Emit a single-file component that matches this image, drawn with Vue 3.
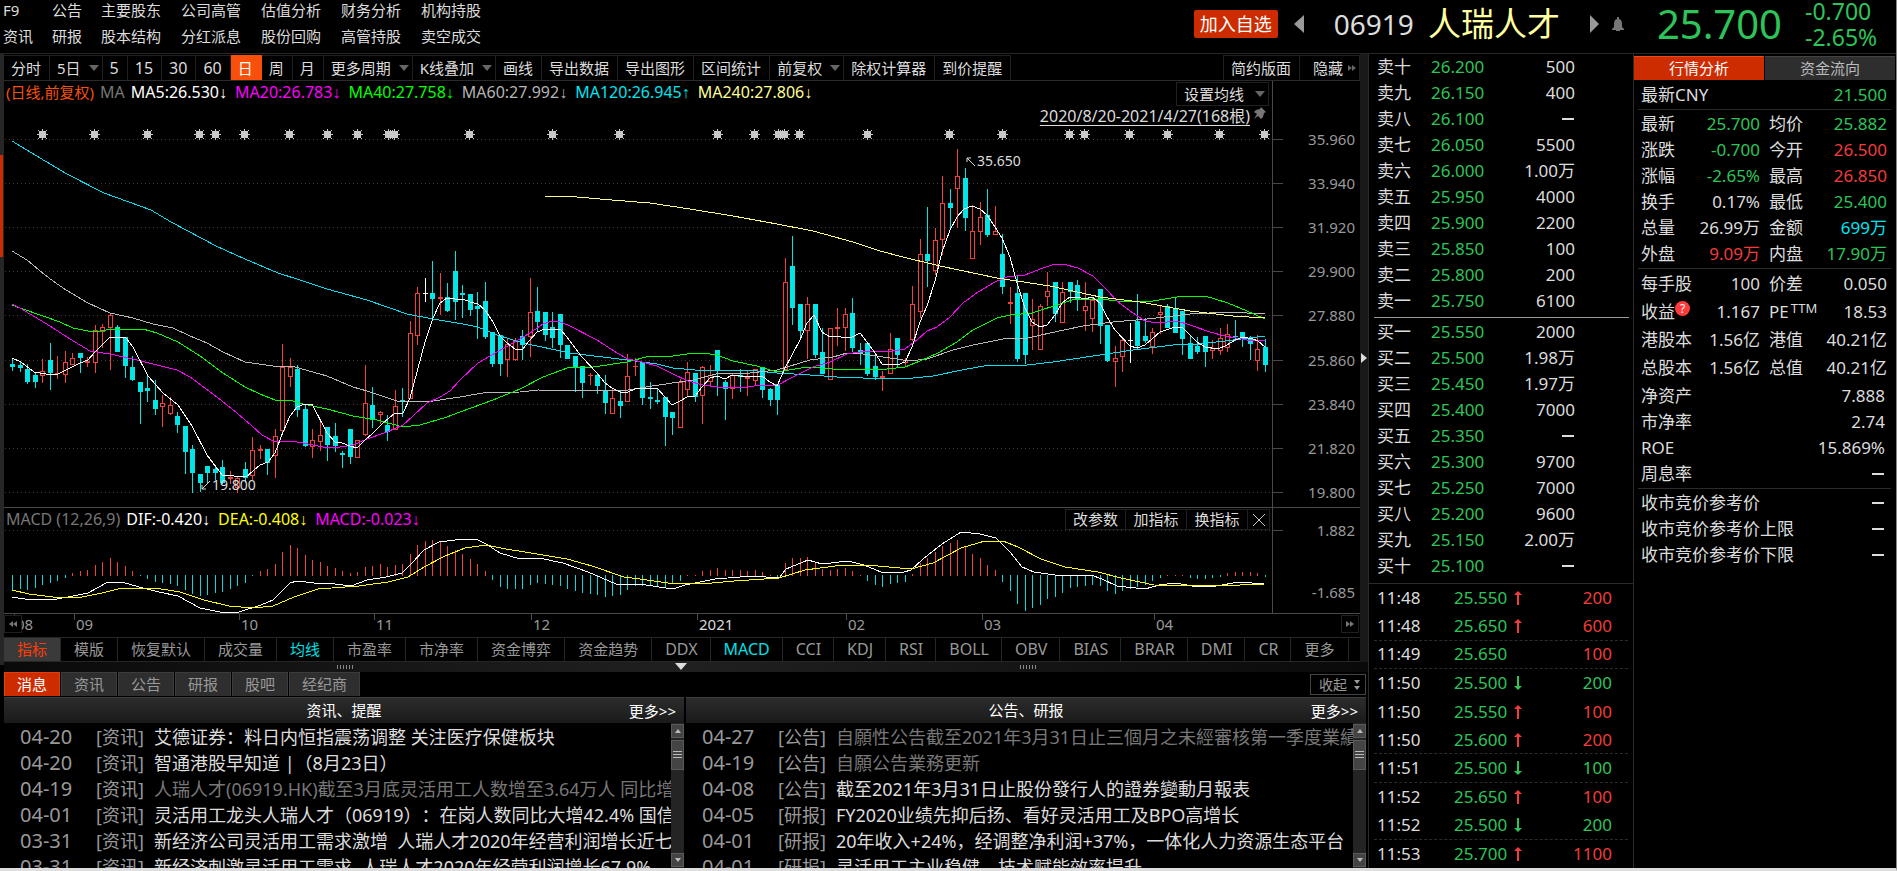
<script setup>
const navLinks = [
  ['F9', '公告', '主要股东', '公司高管', '估值分析', '财务分析', '机构持股'],
  ['资讯', '研报', '股本结构', '分红派息', '股份回购', '高管持股', '卖空成交'],
]

const tools = [
  { t: '分时' }, { t: '5日', menu: true }, { t: '5', num: true }, { t: '15', num: true }, { t: '30', num: true }, { t: '60', num: true },
  { t: '日', on: true }, { t: '周' }, { t: '月' }, { t: '更多周期', menu: true }, { t: 'K线叠加', menu: true },
  { t: '画线' }, { t: '导出数据' }, { t: '导出图形' }, { t: '区间统计' }, { t: '前复权', menu: true },
  { t: '除权计算器' }, { t: '到价提醒' },
]

const legend = [
  { t: 'MA5:26.530', a: '↓', c: 'white' },
  { t: 'MA20:26.783', a: '↓', c: 'magenta' },
  { t: 'MA40:27.758', a: '↓', c: 'lime' },
  { t: 'MA60:27.992', a: '↓', c: 'silver' },
  { t: 'MA120:26.945', a: '↑', c: 'cyan' },
  { t: 'MA240:27.806', a: '↓', c: 'yellow' },
]
const macdLegend = [
  { t: 'DIF:-0.420', a: '↓', c: 'white' },
  { t: 'DEA:-0.408', a: '↓', c: 'bright' },
  { t: 'MACD:-0.023', a: '↓', c: 'magenta' },
]

const priceAxis = [
  [139, '35.960'], [183, '33.940'], [227, '31.920'], [271, '29.900'], [315, '27.880'],
  [360, '25.860'], [404, '23.840'], [448, '21.820'], [492, '19.800'],
]
const months = [
  [14, '08'], [74, '09'], [239, '10'], [374, '11'], [531, '12'],
  [697, '2021'], [846, '02'], [982, '03'], [1154, '04'],
]
const events = [42, 94, 147, 199, 215, 244, 289, 327, 357, 388, 394, 469, 552, 619, 717, 754, 778, 784, 799, 867, 949, 1002, 1069, 1084, 1129, 1167, 1219, 1264]

// one entry per trading day: high, body top, body bottom, low, kind (c down, r up, w flat)
const raw = `359,364,367,371,c;362,365,368,372,c;364,369,382,384,c;373,375,382,388,c;359,371,376,383,r;343,360,373,390,c;356,373,374,379,r;351,362,375,383,r;353,358,365,365,r;353,353,358,373,c
357,361,363,367,r;325,330,363,373,r;324,327,332,348,r;314,315,328,370,r;325,327,352,352,c;337,337,366,378,c;356,367,380,381,c;382,382,392,424,c;375,388,391,402,c;380,400,409,415,c
395,403,407,427,r;397,405,414,415,r;412,416,425,433,c;426,426,452,474,c;445,449,473,493,c;474,474,483,492,c;466,466,473,484,c;466,469,473,480,c;460,467,483,484,c;471,477,479,484,r
477,478,488,493,r;462,469,478,483,c;437,450,476,480,r;445,449,451,459,r;449,449,463,475,c;429,436,456,478,r;344,367,431,433,r;358,367,377,387,r;365,369,410,417,c;405,409,446,447,c
429,440,447,458,r;421,435,442,451,r;427,427,445,461,c;423,436,446,452,c;451,453,455,468,c;429,429,457,464,c;440,440,458,458,r;365,403,435,436,r;387,405,420,428,c;411,412,415,424,r
415,425,432,441,c;390,406,430,430,r;388,400,402,417,c;321,333,399,399,r;287,293,336,345,r;278,293,294,302,w;261,293,299,319,c;273,297,299,315,r;283,297,311,312,c;251,271,302,320,c
285,293,295,318,c;294,294,310,316,c;292,306,309,339,c;282,301,337,339,c;332,332,364,367,c;335,335,364,376,c;338,344,360,377,r;338,341,360,361,r;330,336,345,360,c;278,312,337,357,r
287,311,322,332,c;312,312,335,341,c;312,327,338,348,c;314,314,345,358,c;345,345,359,359,c;356,356,368,392,c;366,366,383,398,c;373,375,376,385,r;373,375,386,394,c;375,390,403,414,c
389,398,414,414,r;390,401,406,418,c;354,376,402,402,r;358,366,367,376,r;362,362,398,405,c;382,397,399,409,c;388,400,402,404,c;397,397,417,446,c;412,412,418,435,c;379,382,428,428,r
362,372,390,396,r;373,373,397,402,c;366,367,396,424,r;365,375,382,386,r;350,350,370,396,c;380,382,389,420,c;374,375,389,399,r;369,375,377,392,c;371,377,379,396,r;369,369,381,385,r
367,367,390,398,c;388,389,400,406,c;384,384,400,415,c;258,282,370,370,r;236,266,308,325,c;304,304,331,340,c;297,304,331,359,r;304,304,355,358,c;328,352,374,374,c;328,328,380,380,r
308,327,329,346,r;308,314,328,351,r;298,313,348,352,c;343,350,353,365,c;343,343,374,376,c;356,366,377,380,c;371,376,378,391,r;333,349,374,374,r;338,338,355,367,c;358,360,363,367,r
286,304,340,341,r;239,254,312,318,r;207,254,261,287,c;228,240,271,275,r;176,203,240,255,r;189,203,208,230,c;149,176,189,228,r;168,178,218,231,c;205,231,259,259,r;202,217,232,245,r
189,215,235,237,c;206,231,235,235,r;234,254,287,294,c;287,302,304,324,r;275,293,359,362,c;293,293,355,364,c;299,319,326,350,r;304,306,350,350,r;272,291,297,306,r;282,282,314,322,c
282,292,323,323,r;282,282,292,303,c;280,285,299,311,c;282,306,311,331,r;297,300,319,332,r;289,289,326,344,c;325,325,361,362,c;346,358,362,387,r;337,340,357,372,r;323,340,341,363,w
294,321,346,349,c;318,336,341,343,c;328,332,347,354,r;306,312,315,334,r;304,306,328,328,c;298,308,333,333,c;311,311,339,355,c;335,343,359,359,c;337,346,352,354,c;336,336,352,367,c
340,348,351,359,r;328,338,351,355,r;324,334,348,352,r;320,336,337,341,c;332,332,337,347,c;336,339,344,360,c;335,349,361,371,r;339,347,365,372,c`
const dayX = (i) => Math.floor(12.5 + 7.5 * i)
const candles = raw.split(/[;\n]/).map((s, i) => {
  const [hi, top, bot, lo, kind] = s.split(',')
  return { x: dayX(i), hi: +hi, top: +top, h: Math.max(1, bot - top), len: Math.max(1, lo - hi), kind }
})

const averages = [
  { c: 'l-cyan', p: '12,141 45,161 67,174 104,193 151,210 171,222 216,246 245,259 278,273 300,280 327,289 367,300 407,314 433,319 463,324 478,327 497,335 523,343 570,353 627,360 657,364 673,368 695,370 747,370 777,373 810,375 837,377 863,378 913,378 933,376 967,369 990,365 1027,365 1053,362 1093,356 1133,350 1173,345 1200,344 1233,340 1265,336' },
  { c: 'l-silver', p: '12,251 27,260 45,275 53,281 66,290 88,303 110,313 133,318 153,324 173,328 190,336 207,343 223,352 245,362 273,366 295,367 327,376 353,387 367,391 397,401 410,402 433,401 460,397 483,393 520,392 538,390 617,391 628,390 652,386 693,380 720,373 750,373 777,370 810,360 833,357 847,353 863,354 890,358 910,361 927,359 953,350 973,345 1003,339 1028,338 1050,333 1083,326 1113,322 1147,319 1190,314 1228,312 1265,314' },
  { c: 'l-lime', p: '12,305 23,309 60,322 73,328 93,332 113,329 143,329 157,333 178,342 200,356 223,373 245,387 260,394 275,400 290,400 303,404 327,409 353,416 377,420 403,427 420,425 447,417 460,412 493,400 520,389 543,377 570,367 593,367 627,362 650,356 673,356 687,354 703,353 717,355 733,361 757,366 777,372 807,367 833,369 887,369 905,367 920,361 938,353 957,342 973,330 997,318 1010,315 1032,313 1060,304 1075,299 1100,299 1117,301 1153,301 1177,297 1205,296 1228,303 1247,311 1265,319' },
  { c: 'l-magenta', p: '12,304 20,308 50,326 70,339 90,351 110,354 133,359 153,364 177,370 190,377 217,397 237,413 252,426 262,435 275,442 290,441 303,443 323,447 340,447 353,445 367,439 387,432 403,425 413,416 427,403 440,397 450,391 460,380 478,363 497,352 513,343 530,333 543,324 552,321 560,322 568,325 597,340 617,353 628,359 642,362 657,366 673,374 688,381 703,385 718,387 747,387 762,385 778,385 793,377 813,367 830,362 847,354 860,352 893,351 905,349 917,340 927,331 937,327 950,317 963,303 978,292 995,282 1007,277 1025,275 1043,268 1055,264 1063,264 1078,268 1093,276 1107,290 1117,301 1133,313 1145,321 1157,323 1177,321 1190,325 1210,332 1225,336 1247,340 1265,341' },
  { c: 'l-yellow', p: '544,196 577,197 612,200 650,203 690,209 733,216 777,224 813,231 853,242 880,251 903,257 940,266 997,278 1050,286 1100,297 1140,302 1190,311 1233,316 1265,318' },
  { c: 'l-white', p: '12,358 21,362 34,372 46,374 58,374 70,368 80,363 88,360 95,352 110,337 118,337 126,338 133,347 148,376 163,393 178,405 192,426 207,455 222,475 246,477 260,465 268,462 275,453 283,432 290,416 297,407 305,404 312,404 327,433 335,442 342,443 350,446 357,448 365,440 372,434 383,423 395,413 403,413 410,398 417,372 425,342 433,318 440,303 447,298 455,299 463,299 470,302 478,304 485,310 493,322 500,336 507,343 515,349 522,350 529,341 537,332 545,329 560,329 567,337 582,357 597,373 605,383 612,388 620,392 628,392 635,389 642,388 657,388 665,397 672,405 680,401 687,397 695,396 702,387 710,378 717,376 725,379 732,375 740,376 762,376 770,382 777,386 785,368 792,355 800,340 807,323 814,315 822,332 830,337 837,336 845,338 852,337 860,333 867,342 875,353 882,364 897,365 905,362 912,347 920,322 927,306 935,281 942,252 950,230 957,217 964,209 972,206 980,209 987,215 995,227 1002,238 1010,257 1017,283 1025,308 1032,322 1040,327 1047,325 1055,315 1062,303 1070,297 1077,297 1085,299 1092,297 1100,303 1107,317 1115,330 1130,346 1137,348 1145,345 1152,339 1160,332 1175,327 1183,328 1190,335 1197,342 1205,347 1218,349 1227,345 1235,340 1243,337 1253,339 1258,341 1265,347' },
]

const zero = 576
const histogram = [
  -15, -14, -15, -13, -10, -8, -6, -3, 3, 5, 6, 11, 14, 18, 14, 10, 5, -1, -4, -7, -8, -9, -11, -15, -19, -21, -20, -18, -17, -14, -11, -8, -1,
  5, 7, 12, 24, 31, 28, 21, 16, 14, 10, 8, 5, 3, 4, 9, 10, 12, 9, 11, 12, 22, 31, 35, 36, 34, 30, 26, 22, 17, 12, 5,
  -5, -12, -14, -14, -14, -10, -8, -9, -10, -11, -14, -16, -18, -19, -20, -22, -21, -20, -15, -11, -11, -11, -11, -12, -9, -6,
  1, 1, 5, 6, 8, 6, 6, 6, 5, 6, 4, 1, -2, 13, 18, 18, 19, 13, 7, 6, 7, 8, 5, 1, -6, -10, -12, -9, -8, -7,
  2, 13, 18, 24, 30, 33, 36, 29, 22, 18, 11, 6, -7, -16, -29, -36, -33, -30, -24, -22, -18, -13, -12, -11, -10, -11,
  -16, -19, -16, -14, -12, -10, -6, -3, 1, 1, 1, -3, -4, -4, -3, -2, 3, 4, 4, 4, 3, -2,
].map((v, i) => ({ x: dayX(i), y: v > 0 ? zero - v : zero - 1, h: Math.abs(v), up: v > 0 }))
const dif = '12,597 31,600 57,599 73,596 88,593 108,582 122,582 139,587 159,592 178,596 200,608 220,612 239,612 261,605 273,600 290,583 297,581 314,583 335,584 351,586 367,580 386,577 402,573 412,563 424,550 439,542 463,539 478,540 486,544 500,553 520,559 539,558 563,563 588,572 616,584 640,584 659,587 673,589 685,585 715,579 753,576 779,578 786,569 808,560 822,564 848,561 864,565 881,572 904,572 911,570 923,559 942,544 961,532 980,534 996,538 1010,552 1022,567 1034,572 1055,575 1091,575 1102,579 1117,586 1145,589 1159,585 1176,583 1192,586 1216,586 1239,582 1264,584'
const dea = '12,590 29,594 53,597 82,597 102,593 122,588 155,588 180,592 204,600 229,606 253,608 273,606 294,597 318,589 359,586 388,582 408,577 424,567 445,556 465,548 486,545 506,549 531,553 567,559 592,566 624,577 640,579 668,583 701,584 734,581 779,578 805,570 843,565 867,565 911,569 933,563 961,548 985,541 1003,541 1018,547 1041,559 1065,567 1098,572 1121,578 1154,585 1216,586 1264,584'

const indicators = ['指标', '模版', '恢复默认', '成交量', '均线', '市盈率', '市净率', '资金博弈', '资金趋势', 'DDX', 'MACD', 'CCI', 'KDJ', 'RSI', 'BOLL', 'OBV', 'BIAS', 'BRAR', 'DMI', 'CR', '更多']
const isLatin = (s) => /^[A-Z]+$/.test(s)
const newsTabs = ['消息', '资讯', '公告', '研报', '股吧', '经纪商']
const feeds = [
  {
    title: '资讯、提醒',
    rows: [
      ['04-20', '资讯', '艾德证券：料日内恒指震荡调整 关注医疗保健板块'],
      ['04-20', '资讯', '智通港股早知道 |（8月23日）'],
      ['04-19', '资讯', '人瑞人才(06919.HK)截至3月底灵活用工人数增至3.64万人 同比增长', true],
      ['04-01', '资讯', '灵活用工龙头人瑞人才（06919）：在岗人数同比大增42.4% 国信'],
      ['03-31', '资讯', '新经济公司灵活用工需求激增  人瑞人才2020年经营利润增长近七成'],
      ['03-31', '资讯', '新经济刺激灵活用工需求  人瑞人才2020年经营利润增长67.9%'],
    ],
  },
  {
    title: '公告、研报',
    rows: [
      ['04-27', '公告', '自願性公告截至2021年3月31日止三個月之未經審核第一季度業績', true],
      ['04-19', '公告', '自願公告業務更新', true],
      ['04-08', '公告', '截至2021年3月31日止股份發行人的證券變動月報表'],
      ['04-05', '研报', 'FY2020业绩先抑后扬、看好灵活用工及BPO高增长'],
      ['04-01', '研报', '20年收入+24%，经调整净利润+37%，一体化人力资源生态平台'],
      ['04-01', '研报', '灵活用工主业稳健，技术赋能效率提升'],
    ],
  },
]

const asks = [
  ['卖十', '26.200', '500'], ['卖九', '26.150', '400'], ['卖八', '26.100', '—'], ['卖七', '26.050', '5500'], ['卖六', '26.000', '1.00万'],
  ['卖五', '25.950', '4000'], ['卖四', '25.900', '2200'], ['卖三', '25.850', '100'], ['卖二', '25.800', '200'], ['卖一', '25.750', '6100'],
]
const bids = [
  ['买一', '25.550', '2000'], ['买二', '25.500', '1.98万'], ['买三', '25.450', '1.97万'], ['买四', '25.400', '7000'], ['买五', '25.350', '—'],
  ['买六', '25.300', '9700'], ['买七', '25.250', '7000'], ['买八', '25.200', '9600'], ['买九', '25.150', '2.00万'], ['买十', '25.100', '—'],
]
const trades = [
  ['11:48', '25.550', '↑', '200', 'red'], ['11:48', '25.650', '↑', '600', 'red', true], ['11:49', '25.650', '', '100', 'red', true],
  ['11:50', '25.500', '↓', '200', 'green'], ['11:50', '25.550', '↑', '100', 'red'], ['11:50', '25.600', '↑', '200', 'red', true],
  ['11:51', '25.500', '↓', '100', 'green', true], ['11:52', '25.650', '↑', '100', 'red'], ['11:52', '25.500', '↓', '200', 'green', true],
  ['11:53', '25.700', '↑', '1100', 'red'],
]

const quoteA = [
  ['最新', '25.700', 'green', '均价', '25.882', 'green'],
  ['涨跌', '-0.700', 'green', '今开', '26.500', 'red'],
  ['涨幅', '-2.65%', 'green', '最高', '26.850', 'red'],
  ['换手', '0.17%', '', '最低', '25.400', 'green'],
  ['总量', '26.99万', '', '金额', '699万', 'cyan'],
  ['外盘', '9.09万', 'red', '内盘', '17.90万', 'green'],
]
const quoteB = [
  ['每手股', '100', '价差', '0.050'],
  ['收益', '1.167', 'PE', '18.53'],
  ['港股本', '1.56亿', '港值', '40.21亿'],
  ['总股本', '1.56亿', '总值', '40.21亿'],
]
const quoteC = [['净资产', '7.888'], ['市净率', '2.74'], ['ROE', '15.869%'], ['周息率', '—']]
const quoteD = [['收市竞价参考价', '—'], ['收市竞价参考价上限', '—'], ['收市竞价参考价下限', '—']]
</script>

<template>
  <div class="app">
    <header class="head">
      <nav class="links">
        <template v-for="(row, r) in navLinks" :key="r">
          <a v-for="l in row" :key="l" href="#">{{ l }}</a>
        </template>
      </nav>
      <div class="stock">
        <button class="add">加入自选</button>
        <button class="step prev" aria-label="上一只"><svg width="10" height="18"><path d="M10 0V18L0 9Z" /></svg></button>
        <span class="code">06919</span>
        <h1>人瑞人才</h1>
        <button class="step next" aria-label="下一只"><svg width="9" height="18"><path d="M0 0V18L9 9Z" /></svg></button>
        <button class="step bell" aria-label="提醒">
          <svg width="12" height="14"><path d="M5 0h2v2l2 1 1 3v4l2 2v1H0v-1l2-2V6l1-3 2-1ZM4 13h4v1H4Z" /></svg>
        </button>
        <strong class="price">25.700</strong>
        <div class="change"><span>-0.700</span><span>-2.65%</span></div>
      </div>
    </header>

    <div class="body">
      <div class="rail"><i></i></div>
      <main class="main">
        <div class="upper">
          <div class="charts">
            <div class="tools">
              <button v-for="b in tools" :key="b.t" :class="{ on: b.on, menu: b.menu, num: b.num }">{{ b.t }}<i v-if="b.menu" class="tri"></i></button>
              <span class="fill"></span>
              <button class="first">简约版面</button>
              <button class="hide">隐藏<svg width="8" height="8"><path d="M0 1V7L4 4ZM4 1V7L8 4Z" /></svg></button>
            </div>
            <div class="plot">
              <svg class="canvas" viewBox="4 81 1356 555" preserveAspectRatio="xMinYMin meet" role="img" aria-label="日K线">
                <g class="crisp">
                  <path v-for="a in priceAxis" :key="a[0]" class="dots" :d="`M5 ${a[0]}.5H1272`" />
                  <path class="dots" d="M5 530.5H1272" />
                  <path class="axis" d="M1272.5 81V613M4 507.5H1360M4 613.5H1360" />
                  <path v-for="a in priceAxis" :key="a[1]" class="axis" :d="`M1273 ${a[0]}.5H1283`" />
                  <path class="axis" d="M1273 530.5H1283" />
                  <path v-for="m in months" :key="m[0]" class="axis" :d="`M${m[0]}.5 614V620`" />
                  <g v-for="(x, i) in events" :key="i" class="event">
                    <path :d="`M${x - 3} 131h7v7h-7ZM${x} 129h1v11h-1ZM${x - 5} 134h11v1h-11ZM${x - 4} 130h1v1h-1ZM${x + 4} 130h1v1h-1ZM${x - 4} 138h1v1h-1ZM${x + 4} 138h1v1h-1Z`" />
                  </g>
                  <g v-for="k in candles" :key="k.x" :class="'k-' + k.kind">
                    <rect :x="k.x" :y="k.hi" width="1" :height="k.len" />
                    <rect v-if="k.kind === 'r' && k.h > 2" class="hollow" :x="k.x - 1.5" :y="k.top + 0.5" width="4" :height="k.h - 1" />
                    <rect v-else :x="k.x - 2" :y="k.top" width="5" :height="k.h" />
                  </g>
                  <polyline v-for="l in averages" :key="l.c" class="line" :class="l.c" :points="l.p" />
                  <rect v-for="b in histogram" :key="b.x" :class="b.up ? 'bar-up' : 'bar-down'" :x="b.x" :y="b.y" width="1" :height="b.h" />
                  <polyline class="line l-white" :points="dif" />
                  <polyline class="line l-bright" :points="dea" />
                </g>
                <path class="mark" d="M975 166L967 158M967 162V158H971M210 481L202 489M202 485V489H206" />
                <text class="tag" x="977" y="166">35.650</text>
                <text class="tag" x="212" y="490">19.800</text>
                <text v-for="a in priceAxis" :key="a[1]" class="scale" x="1355" :y="a[0] + 6">{{ a[1] }}</text>
                <text class="scale" x="1355" y="536">1.882</text>
                <text class="scale" x="1355" y="598">-1.685</text>
                <text v-for="m in months" :key="m[1]" class="month" :class="{ year: m[1] === '2021' }" :x="m[0] + 2" y="630">{{ m[1] }}</text>
                <path class="pin" d="M1261 107l5 5-2 1-1 4-2 2-3-3-4 3 3-5-3-2 2-2 4-1Z" />
              </svg>
              <div class="legend">
                <span class="mode">(日线,前复权)</span><span class="dim">MA</span>
                <span v-for="l in legend" :key="l.t" class="item" :class="l.c">{{ l.t }}<i class="arrow">{{ l.a }}</i></span>
              </div>
              <button class="setma">设置均线<i class="tri"></i></button>
              <a class="range" href="#">2020/8/20-2021/4/27(168根)</a>
              <div class="legend sub">
                <span class="dim">MACD (12,26,9)</span>
                <span v-for="l in macdLegend" :key="l.t" class="item" :class="l.c">{{ l.t }}<i class="arrow">{{ l.a }}</i></span>
              </div>
              <div class="subtools">
                <button>改参数</button><button>加指标</button><button>换指标</button>
                <button class="close" aria-label="关闭"><svg width="12" height="12"><path d="M0 0L12 12M12 0L0 12" /></svg></button>
              </div>
              <button class="scroll back" aria-label="向左"><svg width="8" height="6"><path d="M4 0V6L0 3ZM8 0V6L4 3Z" /></svg></button>
              <button class="scroll fwd" aria-label="向右"><svg width="8" height="6"><path d="M0 0V6L4 3ZM4 0V6L8 3Z" /></svg></button>
            </div>
            <div class="indicators">
              <button v-for="n in indicators" :key="n" :class="{ latin: isLatin(n), sel: n === '指标', hot: n === '均线' || n === 'MACD' }">{{ n }}</button>
            </div>
          </div>
          <div class="vsplit"><svg width="6" height="10"><path d="M0 0V10L6 5Z" /></svg></div>
        </div>
        <div class="hsplit"><i class="grip"></i><svg width="12" height="8"><path d="M0 0H12L6 7Z" /></svg><i class="grip"></i></div>
        <div class="newstabs">
          <button v-for="(n, i) in newsTabs" :key="n" :class="{ on: i === 0 }">{{ n }}</button>
          <span class="fill"></span>
          <button class="fold">收起<svg width="8" height="10"><path d="M1 0H7L4 4ZM1 6H7L4 10Z" /></svg></button>
        </div>
        <div class="feeds">
          <section v-for="f in feeds" :key="f.title" class="feed">
            <div class="feedhead"><h2>{{ f.title }}</h2><a href="#">更多&gt;&gt;</a></div>
            <div class="feedbody">
              <ul>
                <li v-for="(n, i) in f.rows" :key="i">
                  <time>{{ n[0] }}</time><span class="kind">[{{ n[1] }}]</span><a href="#" :class="{ read: n[3] }">{{ n[2] }}</a>
                </li>
              </ul>
              <div class="bar">
                <i class="sb"><svg width="6" height="4"><path d="M0 4H6L3 0Z" /></svg></i>
                <i class="thumb"><svg width="9" height="9"><path d="M0 .5H9M0 3.5H9M0 6.5H9" /></svg></i>
                <i class="sb last"><svg width="6" height="4"><path d="M0 0H6L3 4Z" /></svg></i>
              </div>
            </div>
          </section>
        </div>
      </main>

      <section class="book">
        <table class="depth">
          <tbody>
            <tr v-for="a in asks" :key="a[0]"><th scope="row">{{ a[0] }}</th><td class="green">{{ a[1] }}</td><td class="qty"><i v-if="a[2] === '—'" class="dash"></i><template v-else>{{ a[2] }}</template></td></tr>
          </tbody>
        </table>
        <hr class="mid">
        <table class="depth">
          <tbody>
            <tr v-for="b in bids" :key="b[0]"><th scope="row">{{ b[0] }}</th><td class="green">{{ b[1] }}</td><td class="qty"><i v-if="b[2] === '—'" class="dash"></i><template v-else>{{ b[2] }}</template></td></tr>
          </tbody>
        </table>
        <ol class="trades">
          <li v-for="(t, i) in trades" :key="i" :class="{ cut: t[5] }">
            <time>{{ t[0] }}</time><span class="green">{{ t[1] }}</span>
            <svg width="8" height="14" :class="t[4]"><path v-if="t[2] === '↑'" d="M3 4H0L4 0 8 4H5V14H3Z" /><path v-else-if="t[2] === '↓'" d="M3 0H5V10H8L4 14 0 10H3Z" /></svg>
            <b :class="t[4]">{{ t[3] }}</b>
          </li>
        </ol>
      </section>

      <aside class="quote">
        <div class="qtabs"><button class="on">行情分析</button><button>资金流向</button></div>
        <table class="wide top"><tbody><tr><th scope="row">最新CNY</th><td class="green">21.500</td></tr></tbody></table>
        <hr>
        <table class="pair">
          <tbody>
            <tr v-for="q in quoteA" :key="q[0]"><th scope="row">{{ q[0] }}</th><td :class="q[2]">{{ q[1] }}</td><th scope="row">{{ q[3] }}</th><td :class="q[5]">{{ q[4] }}</td></tr>
          </tbody>
        </table>
        <hr>
        <table class="pair tall">
          <tbody>
            <tr v-for="q in quoteB" :key="q[0]">
              <th scope="row">{{ q[0] }}<i v-if="q[0] === '收益'" class="help">?</i></th><td>{{ q[1] }}</td>
              <th scope="row">{{ q[2] }}<sup v-if="q[2] === 'PE'">TTM</sup></th><td>{{ q[3] }}</td>
            </tr>
          </tbody>
        </table>
        <table class="wide ratios">
          <tbody><tr v-for="q in quoteC" :key="q[0]"><th scope="row">{{ q[0] }}</th><td><i v-if="q[1] === '—'" class="dash"></i><template v-else>{{ q[1] }}</template></td></tr></tbody>
        </table>
        <hr>
        <table class="wide">
          <tbody><tr v-for="q in quoteD" :key="q[0]"><th scope="row">{{ q[0] }}</th><td><i class="dash"></i></td></tr></tbody>
        </table>
      </aside>
    </div>
  </div>
</template>

<style>
body { margin: 0; background: #000; }
</style>

<style scoped>
* { box-sizing: border-box; }
.app {
  height: 100vh; display: flex; flex-direction: column; overflow: hidden;
  background: #000; color: #dcdcdc; border-bottom: 3px solid #dedede; border-right: 1px solid #888;
  font-family: "Noto Sans", "Noto Sans CJK SC", sans-serif; font-size: 15px;
}
button { font: inherit; color: inherit; background: none; border: 0; padding: 0; white-space: nowrap; }
a { color: inherit; text-decoration: none; }
i { font-style: normal; }
ul, ol { list-style: none; margin: 0; padding: 0; }
svg { display: block; fill: currentColor; }
hr { border: 0; height: 1px; background: #2a2a2a; margin: 0; }
table { border-collapse: collapse; table-layout: fixed; }
th, td { padding: 0; font-weight: normal; text-align: left; white-space: nowrap; }
.fill { flex: 1; }
.green { color: #2dc45a; }
.red { color: #f03c3c; }
.cyan { color: #00e5f0; }
.white { color: #fff; }
.magenta { color: #f0f; }
.lime { color: #0f0; }
.silver { color: #b4b4b4; }
.yellow { color: #ffff96; }
.bright { color: #ff0; }
.tri { display: block; border: 5px solid transparent; border-top: 6px solid #666; border-bottom: 0; }

.head { flex: none; height: 54px; display: flex; justify-content: space-between; border-bottom: 1px solid #262626; }
.links { display: grid; grid-template-columns: 49px 49px repeat(5, 80px); grid-auto-rows: 26px; padding-left: 3px; line-height: 20px; }
.stock { display: flex; align-items: center; height: 48px; }
.add { height: 28px; padding: 0 6px; border-radius: 2px; background: #cc2c00; color: #fff; font-size: 18px; line-height: 28px; }
.step { color: #999; }
.prev { margin: 0 30px 0 16px; }
.next { margin: 0 13px 0 30px; }
.bell { margin-right: 33px; color: #777; }
.code { font-size: 28px; margin-right: 14px; }
h1 { margin: 0; font-size: 33px; font-weight: normal; color: #ffffa0; line-height: 48px; }
.price { font-size: 40px; font-weight: normal; color: #2dc45a; margin-right: 23px; line-height: 48px; }
.change { width: 91px; display: flex; flex-direction: column; font-size: 23px; line-height: 26px; color: #2dc45a; }

.body { flex: 1; min-height: 0; display: grid; grid-template-columns: 4px minmax(0, 1fr) 265px 263px; }
.rail { height: 611px; background: #262626; padding-top: 101px; }
.rail i { display: block; height: 102px; width: 3px; background: #cc2c00; }
.main { display: flex; flex-direction: column; min-height: 0; min-width: 0; }
.upper { display: flex; flex: none; }
.charts { flex: 1; min-width: 0; }
.vsplit { width: 8px; background: #191919; color: #ddd; display: flex; align-items: center; padding-left: 1px; }

.tools { height: 27px; padding-top: 1px; display: flex; border-bottom: 1px solid #2a2a2a; }
.tools button { border: 1px solid #202020; border-width: 1px 1px 0 0; padding: 0 8px 0 7px; line-height: 24px; }
.tools button.menu { display: flex; align-items: center; gap: 8px; padding-right: 3px; }
.tools button.num { font-size: 16px; }
.tools button.on { background: #f8500a; border-color: #f8500a; color: #fff; }
.tools button.first { border-left-width: 1px; }
.tools button.hide { display: flex; align-items: center; gap: 5px; padding: 0 3px 0 13px; }
.hide svg { color: #666; }

.plot { position: relative; }
.canvas { width: 100%; height: 556px; }
.crisp { shape-rendering: crispEdges; }
.dots { stroke: #3c3c3c; stroke-dasharray: 1 3; fill: none; }
.axis { stroke: #4a4a4a; fill: none; }
.event { fill: #c8c8c8; }
.k-c { fill: #00e6e6; }
.k-r { fill: #f04040; }
.k-w { fill: #fff; }
.hollow { fill: #000; stroke: #f04040; }
.line { fill: none; stroke-width: 1; }
.l-cyan { stroke: #00e0f0; }
.l-silver { stroke: #b9b9b9; }
.l-lime { stroke: #0f0; }
.l-magenta { stroke: #f0f; }
.l-yellow { stroke: #ffff80; }
.l-white { stroke: #fff; }
.l-bright { stroke: #ff0; }
.bar-up { fill: #f04040; }
.bar-down { fill: #00dcdc; }
.mark { fill: none; stroke: #ddd; }
.tag { font-size: 14px; fill: #dcdcdc; }
.scale { font-size: 15px; fill: #999; text-anchor: end; }
.month { font-size: 15px; fill: #999; }
.month.year { fill: #dcdcdc; }
.pin { fill: #777; }
.legend { position: absolute; left: 2px; top: 0; display: flex; font-size: 16px; line-height: 22px; white-space: nowrap; }
.legend.sub { top: 427px; }
.mode { color: #f8500a; font-size: 15px; margin-right: 6px; }
.dim { color: #777; margin-right: 6px; }
.item { margin-right: 8px; }
.arrow { font-family: "Liberation Sans", sans-serif; }
.setma { position: absolute; top: 1px; right: 91px; height: 24px; padding: 0 3px 0 7px; border: 1px solid #202020; display: flex; align-items: center; gap: 11px; line-height: 22px; }
.range { position: absolute; top: 25px; right: 110px; font-size: 16px; line-height: 20px; text-decoration: underline; text-underline-offset: 3px; }
.subtools { position: absolute; top: 428px; right: 90px; display: flex; }
.subtools button { height: 21px; width: 61px; border: 1px solid #202020; border-left-width: 0; line-height: 19px; background: #000; }
.subtools button:first-child { border-left-width: 1px; }
.subtools .close { width: 22px; display: flex; align-items: center; justify-content: center; }
.close path { stroke: #ccc; }
.scroll { position: absolute; top: 534px; width: 18px; height: 18px; border: 1px solid #202020; background: #000; color: #777; display: flex; align-items: center; justify-content: center; }
.back { left: 0; }
.fwd { right: 1px; }
.indicators { height: 25px; display: flex; border: 1px solid #262626; border-width: 1px 0; font-size: 15px; color: #999; overflow: hidden; }
.indicators button { padding: 0 13px; border-right: 1px solid #262626; line-height: 23px; }
.indicators .latin { font-size: 16px; padding-right: 12px; }
.indicators .sel { background: #3a3a3a; color: #ff3c0a; }
.indicators .hot { color: #00e0e6; }

.hsplit { flex: none; height: 10px; display: grid; grid-template-columns: 1fr auto 1fr; align-items: center; padding: 0 11px 0 0; background: linear-gradient(90deg, #0a0a0a, #202020 50%, #0a0a0a); color: #ddd; }
.grip { width: 17px; height: 4px; margin-left: 333px; background: repeating-linear-gradient(90deg, #888 0 1px, transparent 1px 3px); }
.newstabs { flex: none; height: 25px; display: flex; gap: 1px; padding-right: 2px; color: #999; }
.newstabs button { height: 24px; padding: 0 12px; background: #2e2e2e; border: 1px solid #3c3c3c; border-bottom: 0; line-height: 23px; }
.newstabs button.on { background: #cc2c00; border-color: #e04010; color: #fff; }
.newstabs button.fold { display: flex; align-items: center; gap: 6px; height: 21px; margin-top: 2px; padding: 0 4px 0 8px; background: #000; border: 1px solid #444; font-size: 14px; line-height: 19px; }
.feeds { flex: 1; min-height: 0; display: grid; grid-template-columns: repeat(2, minmax(0, 1fr)); gap: 2px; padding-right: 2px; }
.feed { display: flex; flex-direction: column; min-height: 0; }
.feedhead { flex: none; height: 26px; display: grid; grid-template-columns: 1fr auto 1fr; align-items: center; border-top: 1px solid #3c3c3c; background: linear-gradient(#2c2c2c, #1a1a1a); color: #fff; }
h2 { grid-column: 2; margin: 0; font-size: 15px; font-weight: normal; line-height: 25px; }
.feedhead a { justify-self: end; margin-right: 8px; }
.feedbody { flex: 1; min-height: 0; display: flex; overflow: hidden; }
.feedbody ul { flex: 1; min-width: 0; padding-top: 1px; overflow: hidden; }
.feedbody li { display: grid; grid-template-columns: 76px 58px minmax(0, 1fr); align-items: center; height: 26px; padding-left: 16px; font-size: 18px; line-height: 26px; white-space: pre; text-spacing-trim: space-all; }
.feedbody time { font-size: 20px; color: #999; }
.kind { color: #999; }
.feedbody li a { overflow: hidden; }
.feedbody .read { color: #777; }
.bar { width: 13px; display: flex; flex-direction: column; background: #242424; padding: 1px 0; color: #bbb; }
.bar i { display: flex; align-items: center; justify-content: center; background: #444; border: 1px solid #5a5a5a; }
.sb { height: 14px; flex: none; }
.thumb { height: 30px; margin-top: 2px; flex: none; }
.thumb path { stroke: #bbb; }
.last { margin-top: auto; }

.book { border-left: 1px solid #2a2a2a; display: flex; flex-direction: column; min-height: 0; font-size: 17px; }
.depth { width: 100%; }
.depth tr { height: 26px; line-height: 26px; }
.depth th { width: 62px; padding-left: 8px; }
.depth td.green { width: 64px; }
.depth .qty { text-align: right; padding-right: 58px; }
.dash { display: inline-block; width: 12px; height: 2px; margin-right: 1px; background: #dcdcdc; vertical-align: 5px; }
.mid { flex: none; margin: 3px 4px 1px 5px; background: #999; }
.trades { flex: 1; min-height: 0; display: grid; grid-auto-rows: 1fr; margin-top: 4px; border-top: 1px solid #2a2a2a; }
.trades li { display: grid; grid-template-columns: 77px 60px 8px 1fr; align-items: center; margin: 0 5px; padding: 0 16px 0 3px; line-height: 24px; }
.trades .cut { border-bottom: 1px dashed #2c2c2c; }
.trades b { font-weight: normal; text-align: right; }

.quote { border-left: 1px solid #2a2a2a; padding-top: 1px; font-size: 17px; }
.qtabs { display: grid; grid-template-columns: 1fr 1fr; gap: 1px; padding: 1px 1px 1px 0; font-size: 15px; }
.qtabs button { height: 24px; background: #2e2e2e; border-top: 1px solid #444; color: #bbb; line-height: 23px; }
.qtabs .on { background: #cc2c00; border-color: #e84a18; color: #fff; }
.quote hr { margin: 1px 5px 1px 4px; }
.quote table { width: 100%; }
.quote tr { height: 26px; line-height: 26px; }
.quote .tall tr { height: 28px; line-height: 28px; }
.quote td { text-align: right; }
.wide th { padding-left: 7px; }
.wide td { width: 80px; padding-right: 11px; }
.wide.top { margin-top: 1px; }
.wide.top td { padding-right: 9px; }
.wide.ratios { margin-top: 1px; }
.pair th { width: 50px; padding-left: 7px; }
.pair td:nth-child(2) { width: 78px; padding-right: 2px; }
.pair td + th { width: 58px; padding-left: 7px; }
.pair td:last-child { padding-right: 9px; }
.help { display: inline-block; width: 15px; height: 15px; border-radius: 50%; background: #ff3b3b; color: #fff; font-size: 12px; line-height: 15px; text-align: center; vertical-align: 5px; }
sup { font-size: 13px; line-height: 0; vertical-align: 5px; margin-left: 2px; }
</style>
